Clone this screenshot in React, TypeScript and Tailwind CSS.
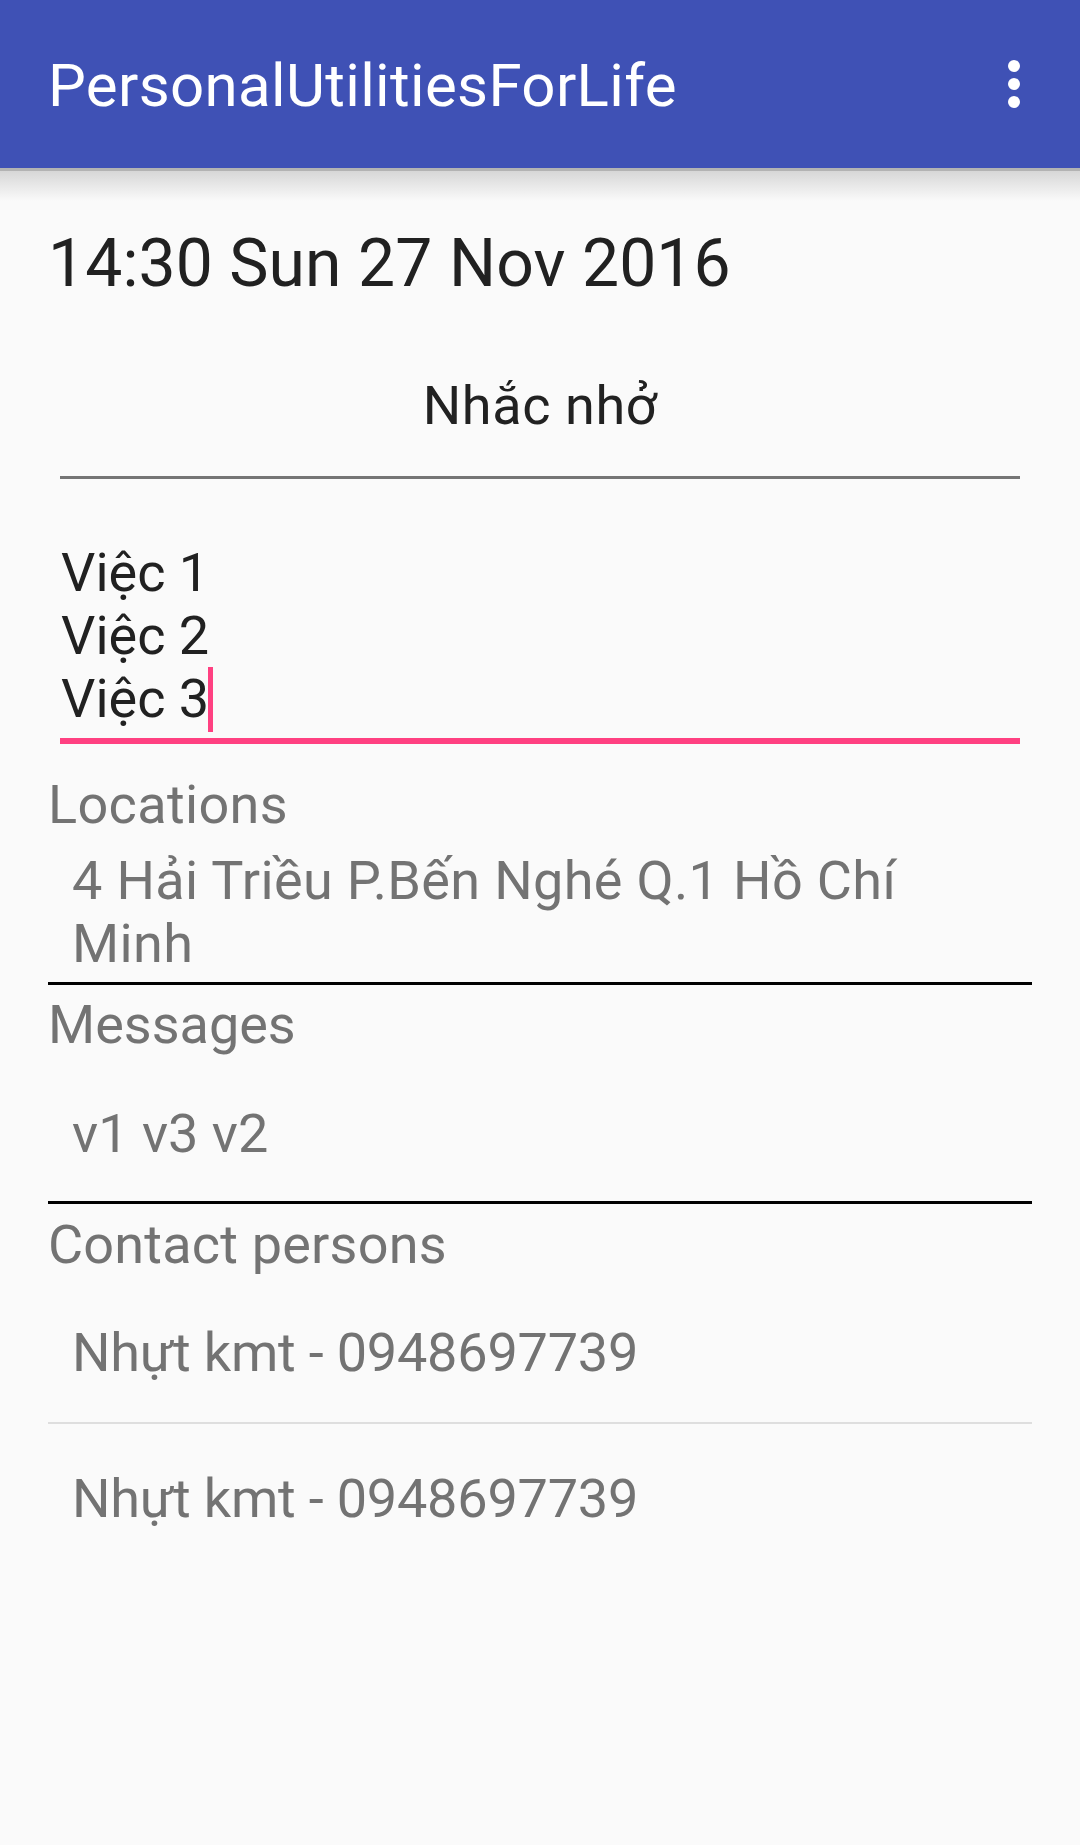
import React from "react";

const contacts = ["Nhựt kmt - 0948697739", "Nhựt kmt - 0948697739"];

const OverflowIcon = () => (
  <svg width="72" height="72" viewBox="0 0 72 72" fill="#ffffff">
    <circle cx="36" cy="18" r="6" />
    <circle cx="36" cy="36" r="6" />
    <circle cx="36" cy="54" r="6" />
  </svg>
);

export default function App() {
  return (
    <div className="w-[1080px] min-h-[1845px] bg-[#fafafa] font-['Roboto',sans-serif] overflow-hidden">
      {/* Toolbar */}
      <header className="relative z-10 h-[168px] bg-[#3f51b5] flex items-center justify-between pl-[48px] pr-[30px]">
        <div className="mt-[4px] text-[60px] leading-[70px] tracking-[0.35px] text-white">PersonalUtilitiesForLife</div>
        <OverflowIcon />
        {/* elevation shadow */}
        <div className="absolute left-0 right-0 top-full h-[3px] bg-[#b3b3b3]" />
        <div className="absolute left-0 right-0 top-[171px] h-[30px] bg-gradient-to-b from-[#d7d7d7] to-[#fafafa]" />
      </header>

      <main className="px-[48px]">
        <div className="pt-[57px] text-[66px] leading-[77px] tracking-[0.1px] text-[#212121]">14:30 Sun 27 Nov 2016</div>

        {/* title field */}
        <div className="mx-[12px] mt-[72px] pb-[39px] border-b-[3px] border-[#757575] text-center text-[54px] leading-[63px] tracking-[0.6px] text-[#212121]">
          Nhắc nhở
        </div>

        {/* focused multiline field */}
        <div className="mx-[12px] mt-[62px] pl-[1px] pb-[8px] border-b-[6px] border-[#ff4081] text-[54px] leading-[63px] text-[#212121]">
          <div>Việc 1</div>
          <div>Việc 2</div>
          <div>
            <span className="relative">
              Việc 3
              <span className="absolute top-0 -right-[4px] w-[5px] h-[65px] bg-[#ff4081]" />
            </span>
          </div>
        </div>

        <div className="mt-[29px] text-[54px] leading-[63px] tracking-[0.35px] text-[#737373]">Locations</div>
        <div className="px-[24px] pt-[13px] pb-[7px] border-b-[3px] border-black text-[54px] leading-[63px] tracking-[0.35px] text-[#737373]">
          4 Hải Triều P.Bến Nghé Q.1 Hồ Chí Minh
        </div>

        <div className="mt-[8px] text-[54px] leading-[63px] text-[#737373]">Messages</div>
        <div className="px-[24px] pt-[46px] pb-[36px] border-b-[3px] border-black text-[54px] leading-[63px] text-[#737373]">
          v1 v3 v2
        </div>

        <div className="mt-[9px] text-[54px] leading-[63px] tracking-[0.2px] text-[#737373]">Contact persons</div>
        <ul>
          {contacts.map((c, i) => (
            <li
              key={i}
              className={
                i === 0
                  ? "px-[24px] pt-[45px] pb-[38px] border-b-2 border-[#dedede] text-[54px] leading-[63px] tracking-[-0.2px] text-[#737373]"
                  : "px-[24px] pt-[43px] pb-[38px] text-[54px] leading-[63px] tracking-[-0.2px] text-[#737373]"
              }
            >
              {c}
            </li>
          ))}
        </ul>
      </main>
    </div>
  );
}
